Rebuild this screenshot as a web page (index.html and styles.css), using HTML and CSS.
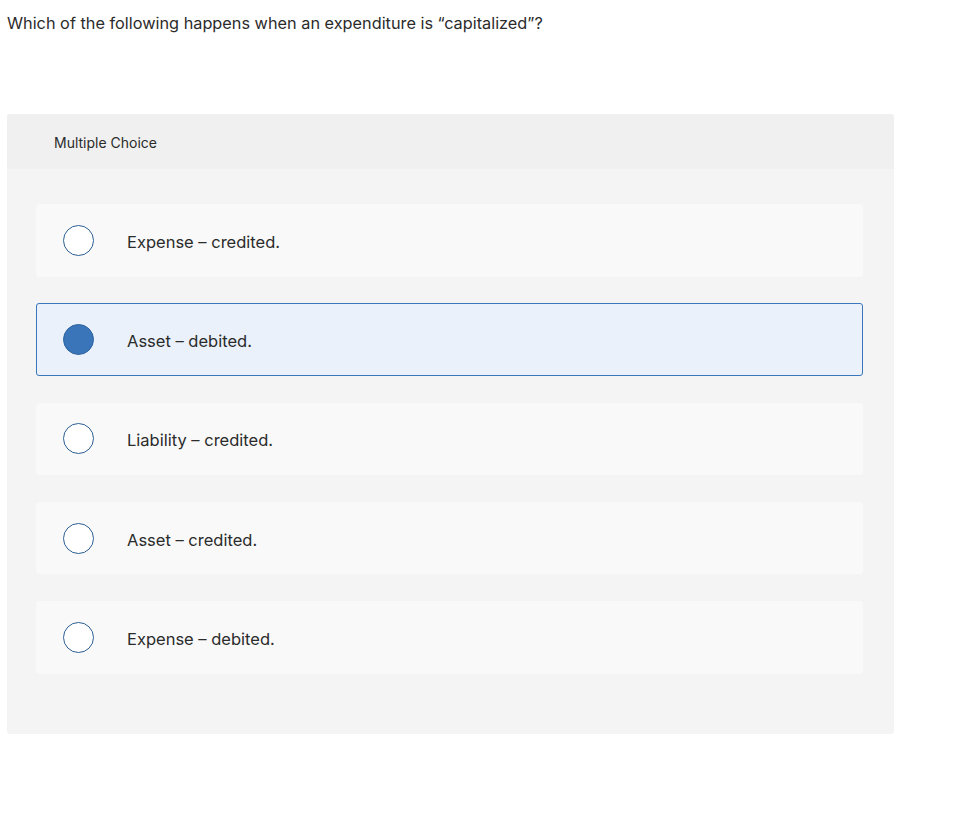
FILE: index.html
```html
<!DOCTYPE html>
<html>
<head>
<meta charset="utf-8">
<link rel="stylesheet" href="styles.css">
</head>
<body>
<p class="question">Which of the following happens when an expenditure is “capitalized”?</p>
<div class="panel">
  <div class="panel-head">Multiple Choice</div>
  <div class="options">
    <div class="option"><span class="radio"></span><span class="label">Expense – credited.</span></div>
    <div class="option selected"><span class="radio"></span><span class="label">Asset – debited.</span></div>
    <div class="option"><span class="radio"></span><span class="label">Liability – credited.</span></div>
    <div class="option"><span class="radio"></span><span class="label">Asset – credited.</span></div>
    <div class="option"><span class="radio"></span><span class="label">Expense – debited.</span></div>
  </div>
</div>
</body>
</html>
```
FILE: styles.css
```css
html, body {
  margin: 0;
  padding: 0;
  background: #fff;
}
body {
  font-family: Inter, "Liberation Sans", Arial, sans-serif;
  color: #2b2b2b;
  padding: 0 7px;
}
.question {
  margin: 0;
  padding-top: 12px;
  font-size: 16.3px;
  line-height: 22px;
  color: #2b2b2b;
}
.panel {
  margin-top: 80px;
  width: 887px;
  background: #f4f4f4;
  border-radius: 3px;
  overflow: hidden;
}
.panel-head {
  height: 55px;
  background: #f0f0f0;
  display: flex;
  align-items: center;
  padding-left: 47px;
  padding-top: 1px;
  box-sizing: border-box;
  font-size: 14px;
  color: #2b2b2b;
}
.options {
  padding: 35px 31px 60px 29px;
  display: flex;
  flex-direction: column;
  gap: 26.75px;
}
.option {
  height: 72.5px;
  box-sizing: border-box;
  background: #f9f9f9;
  border: 1px solid #f9f9f9;
  border-radius: 3px;
  display: flex;
  align-items: center;
  padding-left: 26px;
}
.option.selected {
  background: #eaf1fa;
  border-color: #3a76bb;
}
.radio {
  width: 31px;
  height: 31px;
  box-sizing: border-box;
  border: 1.5px solid #2d5f94;
  border-radius: 50%;
  background: #fff;
  flex: none;
}
.option.selected .radio {
  background: #3a75b9;
  border-color: #2f639f;
}
.label {
  margin-left: 33px;
  padding-top: 3px;
  font-size: 16.5px;
  color: #2b2b2b;
}
```
